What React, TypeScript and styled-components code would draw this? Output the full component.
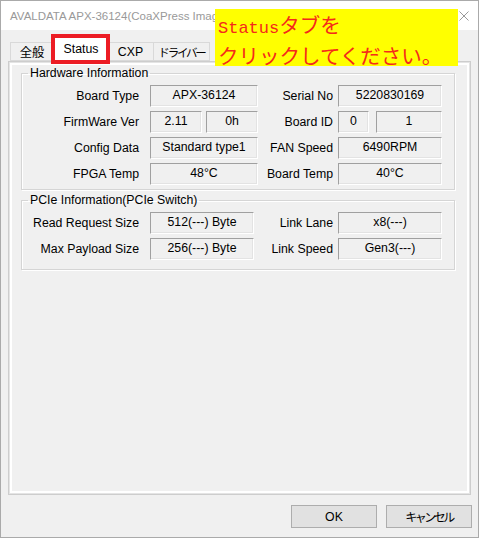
import React from 'react';
import styled, { createGlobalStyle } from 'styled-components';

const GlobalStyle = createGlobalStyle`
  html, body {
    margin: 0;
    padding: 0;
    background: #f0f0f0;
  }
  body {
    font-family: 'Liberation Sans', Arial, 'Noto Sans CJK JP', sans-serif;
    font-size: 12.3px;
    color: #000;
  }
  * {
    box-sizing: border-box;
  }
`;

const Window = styled.div`
  position: relative;
  width: 479px;
  height: 538px;
  border: 1px solid #aaaaaa;
  background: #f0f0f0;
  display: flex;
  flex-direction: column;
  overflow: hidden;
`;

const TitleBar = styled.div`
  height: 29px;
  background: #fff;
  display: flex;
  align-items: center;
  justify-content: space-between;
  padding-left: 9px;
  padding-right: 9px;
`;

// only the part left of the yellow note is visible in the caption
const TitleText = styled.div`
  font-size: 11.5px;
  color: #999;
  white-space: nowrap;
`;

const TabStrip = styled.div`
  height: 31px;
  display: flex;
  align-items: flex-end;
  padding-left: 9px;
`;

const Tab = styled.div<{ $w: number; $active?: boolean; $tight?: boolean }>`
  width: ${(p) => p.$w}px;
  height: ${(p) => (p.$active ? 25 : 19)}px;
  margin: ${(p) => (p.$active ? '0 -2px -1px -2px' : '0 0 0 -1px')};
  border: 1px solid #d9d9d9;
  border-bottom: ${(p) => (p.$active ? 'none' : '1px solid #d9d9d9')};
  background: ${(p) => (p.$active ? '#fff' : '#f0f0f0')};
  position: relative;
  z-index: ${(p) => (p.$active ? 1 : 0)};
  display: flex;
  align-items: center;
  justify-content: center;
  padding-bottom: ${(p) => (p.$active ? 3 : 0)}px;
  font-size: ${(p) => (p.$tight ? 11.5 : 12.3)}px;
  letter-spacing: ${(p) => (p.$tight ? -2.2 : 0)}px;
  white-space: nowrap;
  &:first-child {
    margin-left: 0;
  }
`;

const Panel = styled.div`
  margin-left: 7px;
  width: 463px;
  height: 434px;
  border: 1px solid #cdcdcd;
  box-shadow: inset 0 0 0 1px #e4e4e4, inset 0 0 0 3px #fff;
  padding: 4px 15px 0 12px;
  display: flex;
  flex-direction: column;
  gap: 3px;
`;

const Group = styled.fieldset<{ $pb: number }>`
  margin: 0;
  padding: 5px 0 ${(p) => p.$pb}px 0;
  border: 1px solid #d5d5d5;
  box-shadow: 1px 1px 0 #fff, inset 1px 1px 0 #fff;
  display: flex;
  flex-direction: column;
  gap: 4px;
  min-width: 0;
`;

const Legend = styled.legend`
  margin-left: 6px;
  padding: 0 2px;
  line-height: 14px;
  font-size: 12.3px;
`;

const Row = styled.div`
  display: flex;
  align-items: center;
  height: 22px;
`;

const Label = styled.div<{ $w: number; $pr: number }>`
  width: ${(p) => p.$w}px;
  padding-right: ${(p) => p.$pr}px;
  text-align: right;
  white-space: nowrap;
  line-height: 14px;
`;

const Fields = styled.div<{ $w: number; $gap?: number }>`
  width: ${(p) => p.$w}px;
  display: flex;
  gap: ${(p) => p.$gap ?? 0}px;
  height: 22px;
`;

const Value = styled.div<{ $w?: number }>`
  ${(p) => (p.$w ? `width: ${p.$w}px;` : 'flex: 1;')}
  height: 22px;
  border: 1px solid;
  border-color: #a0a0a0 #fff #fff #a0a0a0;
  box-shadow: inset -1px -1px 0 #e3e3e3;
  text-align: center;
  line-height: 14px;
  padding-top: 2px;
  white-space: nowrap;
  overflow: hidden;
`;

const Footer = styled.div`
  display: flex;
  justify-content: flex-end;
  gap: 9px;
  padding: 10px 6px 0 0;
`;

const Button = styled.div<{ $tight?: boolean }>`
  width: 86px;
  height: 23px;
  border: 1px solid #adadad;
  background: #e1e1e1;
  display: flex;
  align-items: center;
  justify-content: center;
  font-size: ${(p) => (p.$tight ? 12 : 12.3)}px;
  letter-spacing: ${(p) => (p.$tight ? -2.5 : 0)}px;
`;

const Highlight = styled.div`
  position: absolute;
  left: 50px;
  top: 33px;
  width: 59px;
  height: 30px;
  border: 4px solid #ec1c24;
  z-index: 5;
`;

const Note = styled.div`
  position: absolute;
  left: 214px;
  top: 8px;
  width: 243px;
  height: 57px;
  background: #ffff00;
  color: #f52a1a;
  padding: 2px 0 0 3px;
  line-height: 27px;
  font-family: 'Noto Sans CJK JP', sans-serif;
  font-size: 20.5px;
  white-space: nowrap;
  z-index: 5;
`;

const Mono = styled.span`
  font-family: 'Liberation Mono', monospace;
  font-size: 17px;
`;

const CloseIcon = () => (
  <svg width="10" height="10" viewBox="0 0 10 10">
    <path d="M0.5 0.5 L9.5 9.5 M9.5 0.5 L0.5 9.5" stroke="#999" strokeWidth="1" fill="none" />
  </svg>
);

export default function App() {
  return (
    <>
      <GlobalStyle />
      <Window>
        <TitleBar>
          <TitleText>AVALDATA APX-36124(CoaXPress Imag</TitleText>
          <CloseIcon />
        </TitleBar>
        <TabStrip>
          <Tab $w={44}>全般</Tab>
          <Tab $w={58} $active>Status</Tab>
          <Tab $w={47}>CXP</Tab>
          <Tab $w={57} $tight>ドライバー</Tab>
        </TabStrip>
        <Panel>
          <Group $pb={4}>
            <Legend>Hardware Information</Legend>
            <Row>
              <Label $w={128} $pr={11}>Board Type</Label>
              <Fields $w={108}><Value>APX-36124</Value></Fields>
              <Label $w={80} $pr={5}>Serial No</Label>
              <Fields $w={104}><Value>5220830169</Value></Fields>
            </Row>
            <Row>
              <Label $w={128} $pr={11}>FirmWare Ver</Label>
              <Fields $w={108} $gap={4}><Value>2.11</Value><Value>0h</Value></Fields>
              <Label $w={80} $pr={5}>Board ID</Label>
              <Fields $w={104} $gap={7}><Value $w={31}>0</Value><Value>1</Value></Fields>
            </Row>
            <Row>
              <Label $w={128} $pr={11}>Config Data</Label>
              <Fields $w={108}><Value>Standard type1</Value></Fields>
              <Label $w={80} $pr={5}>FAN Speed</Label>
              <Fields $w={104}><Value>6490RPM</Value></Fields>
            </Row>
            <Row>
              <Label $w={128} $pr={11}>FPGA Temp</Label>
              <Fields $w={108}><Value>48°C</Value></Fields>
              <Label $w={80} $pr={5}>Board Temp</Label>
              <Fields $w={104}><Value>40°C</Value></Fields>
            </Row>
          </Group>
          <Group $pb={9}>
            <Legend>PCIe Information(PCIe Switch)</Legend>
            <Row>
              <Label $w={128} $pr={11}>Read Request Size</Label>
              <Fields $w={104}><Value>512(---) Byte</Value></Fields>
              <Label $w={84} $pr={5}>Link Lane</Label>
              <Fields $w={104}><Value>x8(---)</Value></Fields>
            </Row>
            <Row>
              <Label $w={128} $pr={11}>Max Payload Size</Label>
              <Fields $w={104}><Value>256(---) Byte</Value></Fields>
              <Label $w={84} $pr={5}>Link Speed</Label>
              <Fields $w={104}><Value>Gen3(---)</Value></Fields>
            </Row>
          </Group>
        </Panel>
        <Footer>
          <Button>OK</Button>
          <Button $tight>キャンセル</Button>
        </Footer>
        <Highlight />
        <Note>
          <Mono>Status</Mono>タブを<br />クリックしてください。
        </Note>
      </Window>
    </>
  );
}
